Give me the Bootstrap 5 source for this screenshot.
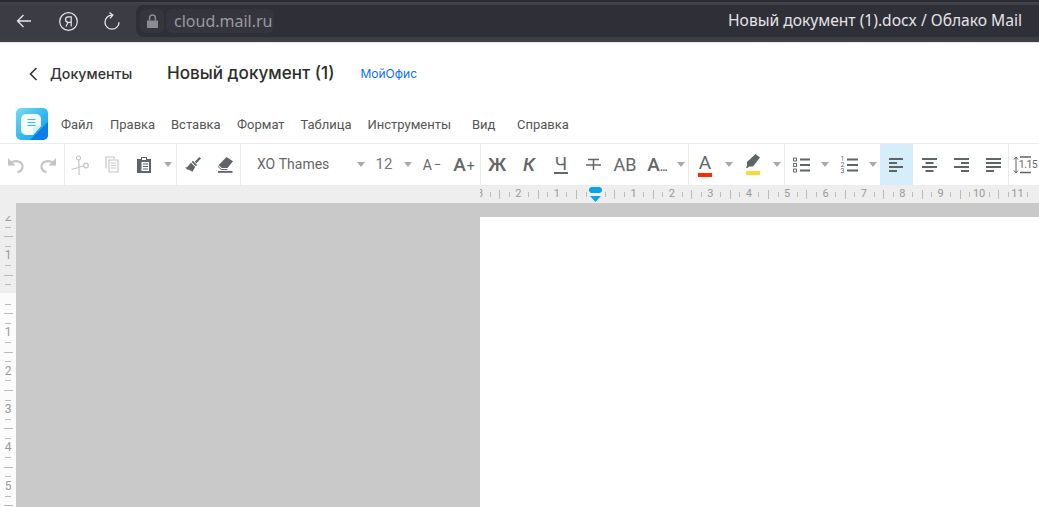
<!doctype html>
<html lang="ru"><head><meta charset="utf-8">
<title>Новый документ (1).docx / Облако Mail</title>
<link href="https://cdn.jsdelivr.net/npm/bootstrap@5.3.0/dist/css/bootstrap.min.css" rel="stylesheet">
<style>
html,body{height:507px;overflow:hidden;background:#fff}
.chrome{height:42px;background:linear-gradient(#2a2a32 0,#2a2a32 2px,#44444d 2px,#3c3c45 6px,#3c3c45 38px,#42424b 42px);color:#e9e9ec;font-family:"Noto Sans",sans-serif;border-bottom:1px solid #e6e6e6;box-sizing:content-box;padding-left:2px}
.navico{width:44px;flex:none}
.addr{margin-left:2px;height:32px;background:#2f2f38;border-radius:8px 0 0 8px;color:#9a9aa2;font-size:16px;min-width:0}
.lockbox{width:24px;height:24px;background:#35353e;border-radius:6px;margin-left:4px;flex:none}
.hostbox{background:#35353e;border-radius:6px;height:24px;line-height:24px;padding:0 8px;margin-left:2px;width:108px;white-space:nowrap}
.tabname{font-size:15.6px;margin-left:auto;padding-right:17px;color:#e4e4e7;white-space:nowrap}
.dochead{height:62px;font-family:Inter,sans-serif;color:#333}
.backicon{position:absolute;left:29px;top:24px}
.backlink{font-size:14.200px;font-weight:500;margin-left:50px;width:117px;color:#333;margin-top:-1px}
.doctitle{font-size:17.100px;font-weight:500;color:#2c2c2c;margin-top:-3px}
.suite{font-size:12px;color:#0d6efd;margin-left:26px;margin-top:-1px}
.menurow{height:38px;font-family:Roboto,sans-serif;font-size:13px;color:#555}
.menuitem{display:block;color:#555;padding-top:2px}
.mi1{margin-left:13px;width:49px}.mi2{width:61px}.mi3{width:66px}.mi4{width:63.500px}.mi5{width:67px}.mi6{width:104.500px}.mi7{width:45px}
.tools{height:43px;border-top:1px solid #ececec;border-bottom:1px solid #ececec;color:#666;font-family:Roboto,sans-serif;overflow:hidden}
.tb{width:32px;height:41px;flex:none;display:flex;align-items:center;justify-content:center}
.tbw{width:16px}
.tb15{width:15px}
.tb33{width:33px}
.tbsep{width:1px;flex:none;background:#ebebeb;height:41px}
.pullsep{margin-left:-1px}
.tbpick{background:#d6edfb}
.caret{width:0;height:0;border-left:4.500px solid transparent;border-right:4.500px solid transparent;border-top:5px solid #aaa}
.fname{width:120px;font-size:14px;color:#666;padding-left:16px;display:flex;align-items:center;height:41px;flex:none}
.caretzero{width:0}
.fsize{width:32px;font-size:15px;color:#777;text-align:center;flex:none;margin-left:7px}
.ltr{font-size:19px;color:#666;line-height:1}
.ltrm{font-weight:500}
.ltri{font-style:italic;font-weight:500}
.ltrab{font-size:18px}
.ltru{border-bottom:2px solid #666;line-height:16px;padding:0 1px;font-size:18px}
.gla{font-size:14px;line-height:18px;color:#666}
.glb{font-size:19px;line-height:22px;font-weight:500;color:#666}
.glm{font-size:13px;margin-left:2px;color:#666;line-height:18px}
.glp{font-size:14px;margin-left:1px;color:#666;line-height:22px;position:relative;top:1px}
.gld{font-size:12px;letter-spacing:-1px;color:#666;line-height:12px}
.glc{font-size:19px;line-height:19px;color:#5f6467;width:14px;text-align:center;border-bottom:4px solid #ff2a00;height:24px}
.numcol{font-size:7px;line-height:6px;color:#5f6467;text-align:left;width:6px}
.lsp{font-size:10.500px;letter-spacing:-.5px;color:#666;margin-left:-16px;line-height:11px}
.ruler-h{height:17px;background:#eeeeee;padding-left:480px;flex:none}
.ruler-clip{overflow:hidden;height:17px;position:relative}
.ruler-run{display:flex;margin-left:-19.2px;width:max-content}
.cellh{width:38.4px;height:17px;flex:none;text-align:center;font:11px/15px Roboto,sans-serif;color:#999;
background:linear-gradient(#bbb,#bbb) 0 4px/1px 9px no-repeat,linear-gradient(#bbb,#bbb) 9.6px 6px/1px 5px no-repeat,linear-gradient(#bbb,#bbb) 28.8px 6px/1px 5px no-repeat}
.marker{position:absolute;left:108px;top:0;width:15px}
.workspace{height:304px}
.ruler-v{width:16px;flex:none;background:linear-gradient(#eeeeee 90px,#fbfbfb 90px);padding-top:13px}
.ruler-vclip{overflow:hidden;height:291px}
.ruler-vrun{margin-top:-18px}
.cellv{height:38.4px;width:16px;text-align:center;font:12px/38.4px Roboto,sans-serif;color:#999;
background:linear-gradient(#bbb,#bbb) 4px 0/9px 1px no-repeat,linear-gradient(#bbb,#bbb) 5px 9.6px/6px 1px no-repeat,linear-gradient(#bbb,#bbb) 5px 28.8px/6px 1px no-repeat}
.canvas{background:#c9c9c9;padding:14px 0 0 464px}
.sheet{background:#fff;height:100%}
svg{display:block;flex:none}
</style></head><body>
<div class="chrome d-flex align-items-center">
  <div class="navico d-flex justify-content-center"><svg width="16" height="14" viewBox="0 0 16 14" fill="none" stroke="#e8e8ea" stroke-width="1.300"><path d="M15 7H1.500M7.500 1 1.500 7l6 6"/></svg></div>
  <div class="navico d-flex justify-content-center"><svg width="19" height="19" viewBox="0 0 19 19" fill="none" stroke="#e8e8ea" stroke-width="1.200"><circle cx="9.500" cy="9.500" r="8.800"/><path d="M12.200 14.500V4.800H9.300a2.700 2.700 0 0 0 0 5.500h2.900M9.200 10.300 6.900 14.500"/></svg></div>
  <div class="navico d-flex justify-content-center"><svg width="16" height="18" viewBox="0 0 16 18" fill="none" stroke="#e8e8ea" stroke-width="1.300"><path d="M8 3.200a7 7 0 1 0 7 7"/><path d="M5.500.6 8.800 3.200 6 6.400"/></svg></div>
  <div class="addr d-flex align-items-center flex-grow-1">
    <div class="lockbox d-flex align-items-center justify-content-center"><svg width="11" height="14" viewBox="0 0 11 14"><path fill="#8b8b93" d="M0 6.500h11V14H0z"/><path fill="none" stroke="#8b8b93" stroke-width="1.500" d="M2.600 6.500V4a2.900 2.900 0 0 1 5.800 0v2.500"/></svg></div>
    <div class="hostbox">cloud.mail.ru</div>
    <div class="tabname">Новый документ (1).docx / Облако Mail</div>
  </div>
</div>
<div class="dochead d-flex align-items-center position-relative">
  <svg class="backicon" width="9" height="14" viewBox="0 0 9 14" fill="none" stroke="#333" stroke-width="1.600"><path d="M7.500 1 1.500 7l6 6"/></svg>
  <div class="backlink">Документы</div>
  <div class="doctitle">Новый документ (1)</div>
  <div class="suite">МойОфис</div>
</div>
<div class="menurow d-flex align-items-center">
  <svg class="ms-3" width="32" height="32" viewBox="0 0 32 32"><defs><linearGradient id="lg" x1="0" y1="0" x2="1" y2="1"><stop offset="0" stop-color="#78dcf2"/><stop offset=".6" stop-color="#2bb4f3"/><stop offset="1" stop-color="#149cf0"/></linearGradient></defs><rect width="32" height="32" rx="5" fill="url(#lg)"/><path d="M32 14 14 32h13a5 5 0 0 0 5-5z" fill="#0a7fe8"/><path d="M10 6h10a5 5 0 0 1 5 5v7l-8 9h-7a5 5 0 0 1-5-5V11a5 5 0 0 1 5-5z" fill="#f6fbff"/><path d="M25 18h-5a3 3 0 0 0-3 3v6z" fill="#d5effb"/><path d="M11.500 11.500h8M11.500 14.500h8M11.500 17.500h8" stroke="#35b8f5" stroke-width="1.100"/></svg>
  <div class="menuitem mi1">Файл</div>
  <div class="menuitem mi2">Правка</div>
  <div class="menuitem mi3">Вставка</div>
  <div class="menuitem mi4">Формат</div>
  <div class="menuitem mi5">Таблица</div>
  <div class="menuitem mi6">Инструменты</div>
  <div class="menuitem mi7">Вид</div>
  <div class="menuitem">Справка</div>
</div>
<div class="tools d-flex align-items-center">
  <div class="tb"><svg width="16" height="16" viewBox="0 0 16 16" fill="none"><path fill="#c4c4c4" d="M0 1v7.500h7.500z"/><path stroke="#c4c4c4" stroke-width="2.200" d="M3 5.800c4-3 11.500-1.800 11.500 3.700 0 3-2 5-5 5.800"/></svg></div>
  <div class="tb"><svg width="16" height="16" viewBox="0 0 16 16" fill="none"><path fill="#c4c4c4" d="M16 1v7.500H8.500z"/><path stroke="#c4c4c4" stroke-width="2.200" d="M13 5.800c-4-3-11.500-1.800-11.500 3.700 0 3 2 5 5 5.800"/></svg></div>
  <div class="tbsep"></div>
  <div class="tb pullsep"><svg width="18" height="20" viewBox="0 0 18 20" fill="none" stroke="#c4c4c4" stroke-width="1.200"><circle cx="7.500" cy="3" r="2"/><path d="M7.700 5 8.200 20"/><circle cx="15" cy="10.500" r="2.300"/><path d="M12.700 11 .5 14.500"/></svg></div>
  <div class="tb"><svg width="14" height="17" viewBox="0 0 14 17" fill="none" stroke="#c8c8c8" stroke-width="1.200"><path d="M1 12.500V1h8v2"/><path d="M4 4h9v12H4zM6 7h5M6 9.500h5M6 12h5"/></svg></div>
  <div class="tb"><svg width="14" height="17" viewBox="0 0 14 17"><path fill="#5f6467" d="M4 1h6v2h4v14H0V3h4z"/><path fill="#fff" d="M5 2h4v2H5zM4.500 6H12v9H4.500z"/><path stroke="#5f6467" stroke-width="1.100" d="M6 8h5M6 10.500h5M6 13h5"/></svg></div>
  <div class="tb tbw"><span class="caret"></span></div>
  <div class="tbsep"></div>
  <div class="tb"><svg width="16" height="15" viewBox="0 0 16 15"><path fill="#5f6467" d="M9.800 4.800 14.300 0 16 1.600 11.300 6.300z"/><path fill="#5f6467" d="M7.800 3.800l4.400 4.200-1.300 1.300-4.300-4.300z"/><path fill="#5f6467" d="M6 5.800l4.200 4.200-3 5-1.200-1.500-1 .5-.8-1.500-1.200.5L0 10.500l2-.3z"/></svg></div>
  <div class="tb"><svg width="16" height="16" viewBox="0 0 16 16"><path fill="#5f6467" d="M9.500 0 16 4.200 10.500 11H4.800L1.500 8.200z"/><path fill="#5f6467" d="M1 14h14.500v1.800H1z"/><path fill="none" stroke="#5f6467" d="M.8 9.300 4.300 12.500h6"/></svg></div>
  <div class="tbsep pullsep"></div>
  <div class="fname">ХО Thames</div>
  <div class="tb caretzero"><span class="caret"></span></div>
  <div class="fsize">12</div>
  <div class="tb tbw"><span class="caret"></span></div>
  <div class="tb"><span class="gla">A</span><span class="glm">−</span></div>
  <div class="tb"><span class="glb">A</span><span class="glp">+</span></div>
  <div class="tbsep"></div>
  <div class="tb ltr ltrm">Ж</div>
  <div class="tb ltr ltri">К</div>
  <div class="tb ltr"><span class="ltru">Ч</span></div>
  <div class="tb"><svg width="15" height="14" viewBox="0 0 15 14" stroke="#666" fill="none"><path stroke-width="1.500" d="M2 1.500h11M0 7h15M7.500 1.500V12"/></svg></div>
  <div class="tb ltr ltrab">АВ</div>
  <div class="tb"><span class="glb">A<span class="gld">...</span></span></div>
  <div class="tb tbw"><span class="caret"></span></div>
  <div class="tbsep pullsep"></div>
  <div class="tb"><span class="glc">A</span></div>
  <div class="tb tbw"><span class="caret"></span></div>
  <div class="tb"><svg width="14" height="21" viewBox="0 0 14 21"><path fill="#5f6467" d="M9.500 0 14 3.500 7 12.500H3L1.500 14H0l1-2.500V8z"/><path fill="#ffd83a" d="M0 17h14v4H0z"/></svg></div>
  <div class="tb tbw"><span class="caret"></span></div>
  <div class="tbsep pullsep"></div>
  <div class="tb"><svg width="17" height="16" viewBox="0 0 17 16" fill="none" stroke="#5f6467"><path d="M.5 1h3v3h-3zM.5 6.500h3v3h-3zM.5 12h3v3h-3z"/><path stroke-width="2" d="M7 2.500h10M7 8h10M7 13.500h10"/></svg></div>
  <div class="tb tbw"><span class="caret"></span></div>
  <div class="tb"><div class="numcol">1<br>2<br>3</div><svg width="11" height="14" viewBox="0 0 11 14" stroke="#5f6467"><path stroke-width="2" d="M0 1.500h11M0 7h11M0 12.500h11"/></svg></div>
  <div class="tb tb15"><span class="caret"></span></div>
  <div class="tb tbpick tb33"><svg width="15" height="14" viewBox="0 0 15 14" stroke="#5f6467" stroke-width="1.800"><path d="M0 1h14M0 5h8M0 9h14M0 13h8"/></svg></div>
  <div class="tb"><svg width="15" height="14" viewBox="0 0 15 14" stroke="#5f6467" stroke-width="1.800"><path d="M0 1h15M3.500 5h8M0 9h15M3.500 13h8"/></svg></div>
  <div class="tb"><svg width="15" height="14" viewBox="0 0 15 14" stroke="#5f6467" stroke-width="1.800"><path d="M0 1h15M7 5h8M0 9h15M7 13h8"/></svg></div>
  <div class="tb"><svg width="15" height="14" viewBox="0 0 15 14" stroke="#5f6467" stroke-width="1.800"><path d="M0 1h15M0 5h15M0 9h15M0 13h8"/></svg></div>
  <div class="tbsep pullsep"></div>
  <div class="tb"><svg width="22" height="18" viewBox="0 0 22 18"><path stroke="#5f6467" fill="none" d="M3 1v16M1 3.500 3 1l2 2.500M1 14.500 3 17l2-2.500"/><path stroke="#5f6467" stroke-width="1.500" d="M7 1h11M7 16.500h11"/></svg><span class="lsp">1.15</span></div>
</div>
<div class="ruler-h">
  <div class="ruler-clip">
    <div class="ruler-run">
      <div class="cellh">3</div><div class="cellh">2</div><div class="cellh">1</div><div class="cellh"></div><div class="cellh">1</div><div class="cellh">2</div><div class="cellh">3</div><div class="cellh">4</div><div class="cellh">5</div><div class="cellh">6</div><div class="cellh">7</div><div class="cellh">8</div><div class="cellh">9</div><div class="cellh">10</div><div class="cellh">11</div>
    </div>
    <svg class="marker" width="15" height="17" viewBox="0 0 15 17"><path fill="#09a5ec" d="M3 1h9a3.200 3.200 0 0 1 0 6H3a3.200 3.200 0 0 1 0-6zM2 10h11l-5.500 6z"/></svg>
  </div>
</div>
<div class="workspace d-flex">
  <div class="ruler-v">
    <div class="ruler-vclip"><div class="ruler-vrun">
      <div class="cellv">2</div><div class="cellv">1</div><div class="cellv"></div><div class="cellv">1</div><div class="cellv">2</div><div class="cellv">3</div><div class="cellv">4</div><div class="cellv">5</div><div class="cellv"></div>
    </div></div>
  </div>
  <div class="canvas flex-grow-1"><div class="sheet"></div></div>
</div>
</body></html>
